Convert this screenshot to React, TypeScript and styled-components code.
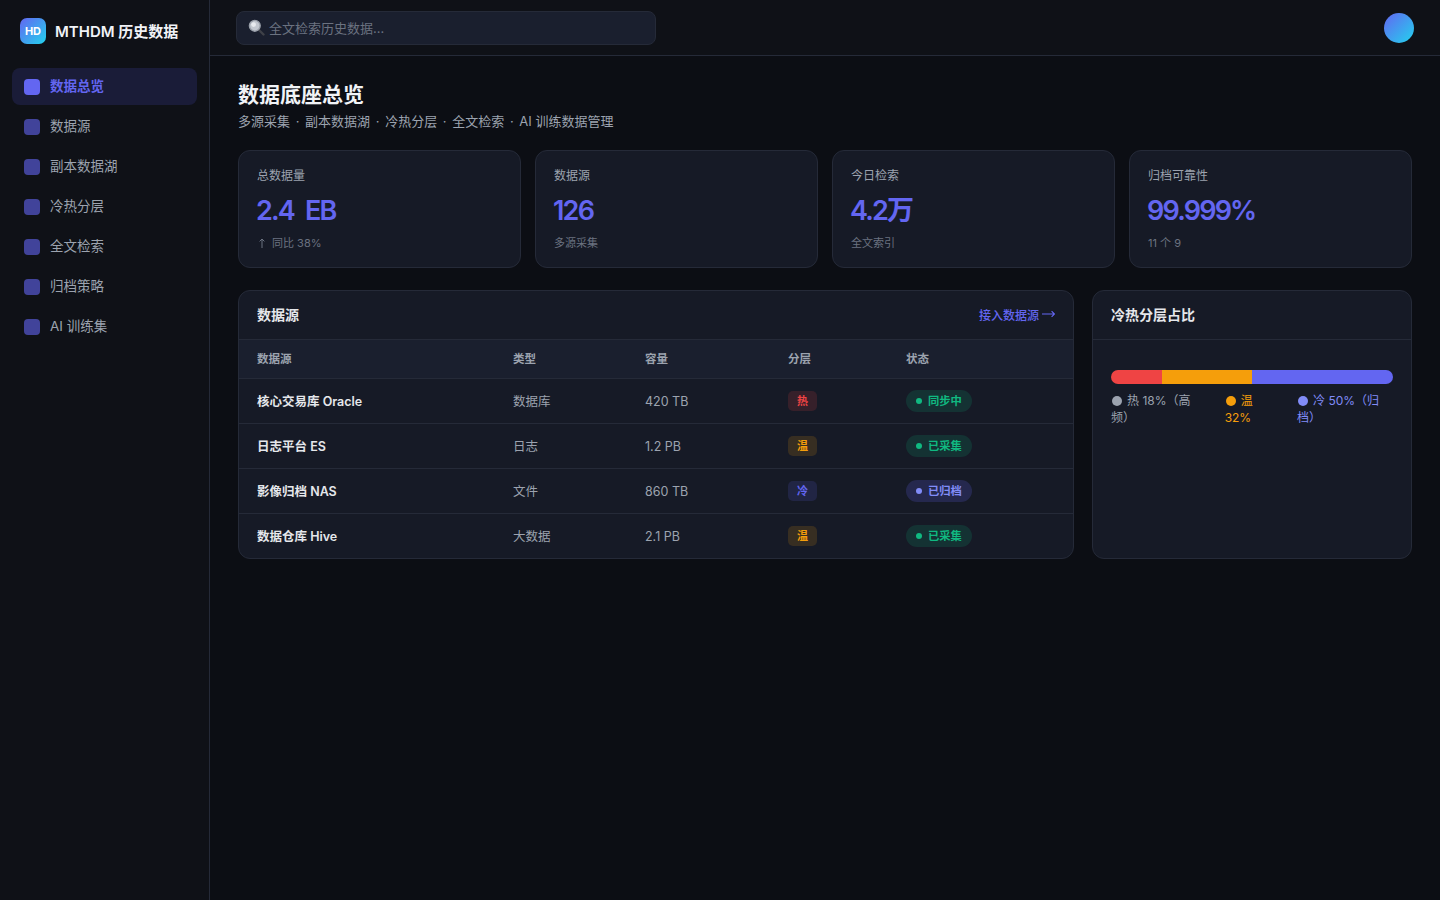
import React from 'react';
import styled, { createGlobalStyle } from 'styled-components';

const GlobalStyle = createGlobalStyle`
  * { box-sizing: border-box; }
  html, body { margin: 0; padding: 0; height: 100%; }
  body {
    background: #0c0e14;
    color: #e5e7eb;
    font-family: Inter, "Noto Sans CJK SC", sans-serif;
  }
`;

const NAV_ITEMS = ['数据总览', '数据源', '副本数据湖', '冷热分层', '全文检索', '归档策略', 'AI 训练集'];

const SUB_PARTS = ['多源采集', '副本数据湖', '冷热分层', '全文检索', 'AI 训练数据管理'];

const STATS = [
  { label: '总数据量', value: '2.4 EB', note: '同比 38%', up: true },
  { label: '数据源', value: '126', note: '多源采集', up: false },
  { label: '今日检索', value: '4.2万', note: '全文索引', up: false },
  { label: '归档可靠性', value: '99.999%', note: '11 个 9', up: false },
];

type Tier = 'hot' | 'warm' | 'cold';
type Status = 'ok' | 'info';

const ROWS: { name: string; kind: string; size: string; tier: Tier; tierText: string; status: Status; statusText: string }[] = [
  { name: '核心交易库 Oracle', kind: '数据库', size: '420 TB', tier: 'hot', tierText: '热', status: 'ok', statusText: '同步中' },
  { name: '日志平台 ES', kind: '日志', size: '1.2 PB', tier: 'warm', tierText: '温', status: 'ok', statusText: '已采集' },
  { name: '影像归档 NAS', kind: '文件', size: '860 TB', tier: 'cold', tierText: '冷', status: 'info', statusText: '已归档' },
  { name: '数据仓库 Hive', kind: '大数据', size: '2.1 PB', tier: 'warm', tierText: '温', status: 'ok', statusText: '已采集' },
];

const TIER_COLORS: Record<Tier, { fg: string; bg: string }> = {
  hot: { fg: '#ef4444', bg: 'rgba(239,68,68,.15)' },
  warm: { fg: '#f59e0b', bg: 'rgba(245,158,11,.15)' },
  cold: { fg: '#6366f1', bg: 'rgba(99,102,241,.15)' },
};

const STATUS_COLORS: Record<Status, { fg: string; bg: string; dot: string }> = {
  ok: { fg: '#10b981', bg: 'rgba(16,185,129,.15)', dot: '#10b981' },
  info: { fg: '#818cf8', bg: 'rgba(99,102,241,.2)', dot: '#818cf8' },
};

const SearchIcon = () => (
  <svg width="17" height="17" viewBox="0 0 17 17">
    <line x1="10.5" y1="10.5" x2="15.5" y2="15.5" stroke="#3f4148" strokeWidth="2.4" strokeLinecap="round" />
    <circle cx="6.8" cy="6.8" r="5.4" fill="#c3c8d0" stroke="#9aa0aa" strokeWidth="1.4" />
    <circle cx="5.6" cy="5.6" r="2.4" fill="#e8ebef" />
  </svg>
);

const ArrowUp = () => (
  <svg width="6" height="10" viewBox="0 0 6 10" fill="none" stroke="currentColor" strokeWidth="1">
    <path d="M3 10V1M.6 3.4 3 1l2.4 2.4" />
  </svg>
);

const ArrowRight = () => (
  <svg width="13" height="8" viewBox="0 0 13 8" fill="none" stroke="currentColor" strokeWidth="1.1">
    <path d="M0 4h12.4M9.6 1.2 12.4 4 9.6 6.8" />
  </svg>
);

export default function App() {
  return (
    <Shell>
      <GlobalStyle />
      <Sidebar>
        <Brand>
          <BrandMark>HD</BrandMark>
          <BrandName>MTHDM 历史数据</BrandName>
        </Brand>
        <Nav>
          {NAV_ITEMS.map((item, i) => (
            <NavItem key={item} $active={i === 0}>
              <NavIcon $active={i === 0} />
              <NavLabel>{item}</NavLabel>
            </NavItem>
          ))}
        </Nav>
      </Sidebar>
      <Main>
        <Topbar>
          <SearchBox>
            <SearchGlyph><SearchIcon /></SearchGlyph>
            <SearchHint>全文检索历史数据…</SearchHint>
          </SearchBox>
          <Avatar />
        </Topbar>
        <Content>
          <PageTitle>数据底座总览</PageTitle>
          <PageSub>
            {SUB_PARTS.map((part, i) => (
              <React.Fragment key={part}>
                {i > 0 && <SubDot> · </SubDot>}
                {part}
              </React.Fragment>
            ))}
          </PageSub>
          <StatGrid>
            {STATS.map(s => (
              <StatCard key={s.label}>
                <StatLabel>{s.label}</StatLabel>
                <StatValue>{s.value}</StatValue>
                <StatNote>
                  {s.up && <UpMark><ArrowUp /></UpMark>}
                  {s.note}
                </StatNote>
              </StatCard>
            ))}
          </StatGrid>
          <PanelRow>
            <Panel>
              <PanelHead>
                <PanelTitle>数据源</PanelTitle>
                <PanelLink>接入数据源<ArrowRight /></PanelLink>
              </PanelHead>
              <Table>
                <colgroup>
                  <col width="256" />
                  <col width="132" />
                  <col width="143" />
                  <col width="118" />
                  <col />
                </colgroup>
                <thead>
                  <tr>
                    <Th>数据源</Th>
                    <Th>类型</Th>
                    <Th>容量</Th>
                    <Th>分层</Th>
                    <Th>状态</Th>
                  </tr>
                </thead>
                <tbody>
                  {ROWS.map(r => (
                    <tr key={r.name}>
                      <NameCell>{r.name}</NameCell>
                      <Td>{r.kind}</Td>
                      <SizeCell>{r.size}</SizeCell>
                      <Td><TierTag $tier={r.tier}>{r.tierText}</TierTag></Td>
                      <Td>
                        <StatusPill $status={r.status}>
                          <StatusDot $status={r.status} />
                          {r.statusText}
                        </StatusPill>
                      </Td>
                    </tr>
                  ))}
                </tbody>
              </Table>
            </Panel>
            <Panel>
              <PanelHead>
                <PanelTitle>冷热分层占比</PanelTitle>
              </PanelHead>
              <SideBody>
                <TierBar>
                  <TierSegment $color="#ef4444" $share={18} />
                  <TierSegment $color="#f59e0b" $share={32} />
                  <TierSegment $color="#6366f1" $share={50} />
                </TierBar>
                <Legend>
                  <LegendItem $color="#9ca3af"><LegendDot $color="#9ca3af" />热 18%（高频）</LegendItem>
                  <LegendItem $color="#f59e0b"><LegendDot $color="#f59e0b" />温 32%</LegendItem>
                  <LegendItem $color="#818cf8"><LegendDot $color="#818cf8" />冷 50%（归档）</LegendItem>
                </Legend>
              </SideBody>
            </Panel>
          </PanelRow>
        </Content>
      </Main>
    </Shell>
  );
}

const Shell = styled.div`
  display: flex;
  min-height: 900px;
`;

const Sidebar = styled.aside`
  flex: 0 0 210px;
  background: #0f1117;
  border-right: 1px solid #252a38;
  padding: 18px 12px;
`;

const Brand = styled.div`
  display: flex;
  align-items: center;
  gap: 9px;
  padding: 0 8px;
  margin-bottom: 24px;
`;

const BrandMark = styled.div`
  width: 26px;
  height: 26px;
  border-radius: 7px;
  background: linear-gradient(135deg, #6366f1, #22d3ee);
  color: #fff;
  font-size: 11px;
  font-weight: 700;
  display: flex;
  align-items: center;
  justify-content: center;
`;

const BrandName = styled.div`
  font-size: 15px;
  font-weight: 600;
  color: #f1f3f7;
  white-space: nowrap;
  margin-bottom: 2px;
`;

const Nav = styled.nav`
  display: flex;
  flex-direction: column;
  gap: 3px;
`;

const NavItem = styled.div<{ $active?: boolean }>`
  display: flex;
  align-items: center;
  gap: 10px;
  height: 37px;
  padding: 0 12px;
  border-radius: 8px;
  font-size: 13.5px;
  font-weight: ${p => (p.$active ? 600 : 400)};
  color: ${p => (p.$active ? '#6366f1' : '#9ca3af')};
  background: ${p => (p.$active ? '#1a1c38' : 'transparent')};
`;

const NavIcon = styled.span<{ $active?: boolean }>`
  width: 16px;
  height: 16px;
  border-radius: 4px;
  background: #6366f1;
  opacity: ${p => (p.$active ? 1 : 0.6)};
`;

const NavLabel = styled.span`
  margin-bottom: 4px;
`;

const Main = styled.main`
  flex: 1;
  min-width: 0;
`;

const Topbar = styled.header`
  height: 56px;
  background: #0f1117;
  border-bottom: 1px solid #252a38;
  display: flex;
  align-items: center;
  justify-content: space-between;
  padding: 0 26px;
`;

const SearchBox = styled.div`
  position: relative;
  width: 420px;
  height: 34px;
  background: #1a1f2e;
  border: 1px solid #252a38;
  border-radius: 8px;
  padding-left: 32px;
  display: flex;
  align-items: center;
`;

const SearchGlyph = styled.span`
  position: absolute;
  left: 11px;
  top: 7px;
  display: flex;
`;

const SearchHint = styled.span`
  font-size: 13px;
  color: #6b7280;
`;

const Avatar = styled.div`
  width: 30px;
  height: 30px;
  border-radius: 50%;
  background: linear-gradient(135deg, #6366f1, #22d3ee);
`;

const Content = styled.div`
  padding: 24px 28px;
`;

const PageTitle = styled.h1`
  margin: 0 0 1px;
  font-size: 21px;
  line-height: 30px;
  font-weight: 700;
  color: #f1f3f7;
`;

const PageSub = styled.p`
  margin: 0 0 19px;
  font-size: 13px;
  line-height: 20px;
  color: #9ca3af;
`;

const SubDot = styled.span`
  margin: 0 2px;
`;

const StatGrid = styled.div`
  display: grid;
  grid-template-columns: repeat(4, 1fr);
  gap: 14px;
  margin-bottom: 22px;
`;

const StatCard = styled.div`
  height: 118px;
  background: #161a26;
  border: 1px solid #252a38;
  border-radius: 12px;
  padding: 16px 18px;
`;

const StatLabel = styled.div`
  font-size: 12px;
  line-height: 18px;
  color: #9ca3af;
`;

const StatValue = styled.div`
  margin-top: 9px;
  margin-left: -1px;
  font-size: 27px;
  line-height: 34px;
  font-weight: 600;
  letter-spacing: -1.8px;
  word-spacing: 6px;
  color: #6366f1;
`;

const StatNote = styled.div`
  margin-top: 7px;
  font-size: 11px;
  line-height: 16px;
  color: #6b7280;
`;

const UpMark = styled.span`
  display: inline-flex;
  width: 15px;
  padding-left: 2px;
  vertical-align: -1px;
`;

const PanelRow = styled.div`
  display: grid;
  grid-template-columns: 836px 320px;
  gap: 18px;
`;

const Panel = styled.section`
  background: #161a26;
  border: 1px solid #252a38;
  border-radius: 12px;
  overflow: hidden;
`;

const PanelHead = styled.div`
  height: 49px;
  display: flex;
  align-items: center;
  justify-content: space-between;
  padding: 0 18px;
  border-bottom: 1px solid #252a38;
`;

const PanelTitle = styled.h2`
  margin: 0 0 2px;
  font-size: 14px;
  font-weight: 600;
  color: #e5e7eb;
`;

const PanelLink = styled.span`
  display: inline-flex;
  align-items: center;
  gap: 3px;
  margin-bottom: 2px;
  font-size: 12px;
  font-weight: 500;
  color: #6366f1;
`;

const Table = styled.table`
  width: 100%;
  border-collapse: collapse;
  table-layout: fixed;
`;

const Th = styled.th`
  height: 38px;
  padding: 0 18px 1px;
  text-align: left;
  font-size: 11.5px;
  font-weight: 600;
  color: #9ca3af;
  background: #1a1f2e;
  border-bottom: 1px solid #252a38;
`;

const Td = styled.td`
  height: 45px;
  padding: 0 18px;
  font-size: 12.5px;
  color: #9ca3af;
  border-bottom: 1px solid #252a38;
  tr:last-child & { border-bottom: none; }
`;

const NameCell = styled(Td)`
  font-weight: 600;
  color: #e5e7eb;
`;

const SizeCell = styled(Td)`
  padding-top: 2px;
`;

const TierTag = styled.span<{ $tier: Tier }>`
  display: inline-block;
  padding: 0 9px;
  height: 20px;
  line-height: 20px;
  border-radius: 5px;
  font-size: 11px;
  font-weight: 600;
  vertical-align: middle;
  color: ${p => TIER_COLORS[p.$tier].fg};
  background: ${p => TIER_COLORS[p.$tier].bg};
`;

const StatusPill = styled.span<{ $status: Status }>`
  display: inline-flex;
  align-items: center;
  gap: 6px;
  height: 22px;
  padding: 0 10px 2px;
  border-radius: 11px;
  font-size: 11.3px;
  font-weight: 600;
  vertical-align: middle;
  color: ${p => STATUS_COLORS[p.$status].fg};
  background: ${p => STATUS_COLORS[p.$status].bg};
`;

const StatusDot = styled.i<{ $status: Status }>`
  width: 6px;
  height: 6px;
  margin-top: 2px;
  border-radius: 50%;
  background: ${p => STATUS_COLORS[p.$status].dot};
`;

const SideBody = styled.div`
  padding: 30px 18px 18px;
`;

const TierBar = styled.div`
  display: flex;
  height: 14px;
  border-radius: 7px;
  overflow: hidden;
`;

const TierSegment = styled.div<{ $color: string; $share: number }>`
  background: ${p => p.$color};
  flex: 0 0 ${p => p.$share}%;
`;

const Legend = styled.div`
  display: flex;
  gap: 20px;
  margin-top: 8px;
`;

const LegendItem = styled.div<{ $color: string }>`
  font-size: 12px;
  line-height: 17px;
  color: ${p => p.$color};
`;

const LegendDot = styled.i<{ $color: string }>`
  display: inline-block;
  width: 10px;
  height: 10px;
  margin: 0 5px 0 1px;
  border-radius: 50%;
  vertical-align: -1px;
  background: ${p => p.$color};
`;
